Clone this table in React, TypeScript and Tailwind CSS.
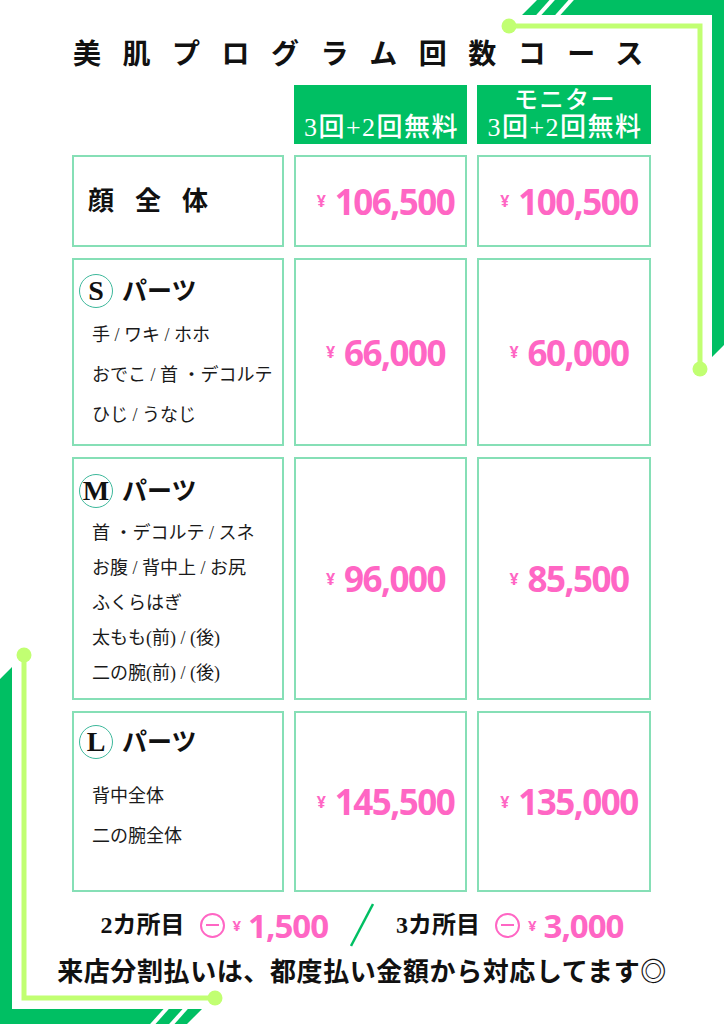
import React from 'react';

const jp = "font-['Liberation_Serif','Noto_Sans_CJK_JP',serif]";
const cell = 'border-2 border-[#86dfb6] bg-white';

function Corner() {
  return (
    <g>
      <polygon points="522,15 537,0 724,0 724,345 712,357 712,15" fill="#00bf63" />
      <line x1="537" y1="17" x2="554" y2="-2" stroke="#fff" strokeWidth="4" />
      <line x1="556" y1="17" x2="573" y2="-2" stroke="#fff" strokeWidth="4" />
      <polyline points="509,26 700,26 700,369" fill="none" stroke="#c1ff72" strokeWidth="5" />
      <circle cx="509" cy="26" r="7.5" fill="#c1ff72" />
      <circle cx="700" cy="369" r="7.5" fill="#c1ff72" />
    </g>
  );
}

function Price({ value }: { value: string }) {
  return (
    <div className={`${cell} flex items-center justify-center pl-[10px] font-['Open_Sans',sans-serif] text-[#ff66c4]`}>
      <span className="mr-[9px] text-[16px] font-bold">¥</span>
      <span className="text-[35px] leading-none font-bold tracking-[-1.5px]">{value}</span>
    </div>
  );
}

function Minus() {
  return (
    <span className="flex h-[25px] w-[25px] items-center justify-center rounded-full border-[2.5px] border-[#ff66c4]">
      <span className="h-[2.5px] w-[13px] bg-[#ff66c4]" />
    </span>
  );
}

type PartsProps = {
  size: string;
  items: string[];
  pt: string;
  gap: string;
  lh: string;
};

function Parts({ size, items, pt, gap, lh }: PartsProps) {
  return (
    <div className={`${cell} flex flex-col pl-[5px] ${pt}`}>
      <div className="flex items-center gap-[9px]">
        <span className="flex h-[34px] w-[34px] items-center justify-center rounded-full border border-[#3db89b] font-['Liberation_Serif',serif] text-[28px] leading-none font-bold">
          {size}
        </span>
        <span className={`${jp} text-[25px] leading-none font-bold`}>パーツ</span>
      </div>
      <ul className={`${gap} pl-[13px] text-[18px] text-[#1a1a1a] ${lh}`}>
        {items.map((t) => (
          <li key={t}>{t}</li>
        ))}
      </ul>
    </div>
  );
}

export default function App() {
  return (
    <div className={`relative h-[1024px] w-[724px] overflow-hidden bg-white text-[#111] ${jp}`}>
      <svg className="pointer-events-none absolute inset-0" width="724" height="1024" viewBox="0 0 724 1024">
        <Corner />
        <g transform="rotate(180 362 512)">
          <Corner />
        </g>
      </svg>

      <div className="relative">
        <h1 className="pt-[39px] pl-[73px] text-[28px] leading-[32px] font-bold tracking-[21.5px]">
          美肌プログラム回数コース
        </h1>

        <div className="mt-[14px] ml-[72px] grid grid-cols-[212px_173px_174px] grid-rows-[59px_92px_188px_243px_181px] gap-x-[10px] gap-y-[11px]">
          <div />
          <div className="flex flex-col items-center justify-end bg-[#00bf63] pb-[3px] pl-[2px] text-[26px] leading-[27px] font-medium tracking-[1.5px] text-white">
            <span>3回+2回無料</span>
          </div>
          <div className="flex flex-col items-center justify-end bg-[#00bf63] pb-[3px] pl-[2px] text-[26px] leading-[27px] font-medium tracking-[1.5px] text-white">
            <span className="text-[24px]">モニター</span>
            <span>3回+2回無料</span>
          </div>

          <div className={`${cell} flex items-center pl-[14px] text-[26px] font-bold tracking-[21px]`}>顔全体</div>
          <Price value="106,500" />
          <Price value="100,500" />

          <Parts
            size="S"
            pt="pt-[14px]"
            gap="mt-[7px]"
            lh="leading-[40px]"
            items={['手 / ワキ / ホホ', 'おでこ / 首 ・デコルテ', 'ひじ / うなじ']}
          />
          <Price value="66,000" />
          <Price value="60,000" />

          <Parts
            size="M"
            pt="pt-[15px]"
            gap="mt-[8px]"
            lh="leading-[35px]"
            items={['首 ・デコルテ / スネ', 'お腹 / 背中上 / お尻', 'ふくらはぎ', '太もも(前) / (後)', '二の腕(前) / (後)']}
          />
          <Price value="96,000" />
          <Price value="85,500" />

          <Parts
            size="L"
            pt="pt-[12px]"
            gap="mt-[17px]"
            lh="leading-[40px]"
            items={['背中全体', '二の腕全体']}
          />
          <Price value="145,500" />
          <Price value="135,000" />
        </div>

        <div className="mt-[11px] flex h-[44px] items-center justify-center">
          <span className="text-[24px] font-bold">2カ所目</span>
          <span className="ml-[15px]">
            <Minus />
          </span>
          <span className="ml-[8px] font-['Open_Sans',sans-serif] text-[15px] font-bold text-[#ff66c4]">¥</span>
          <span className="ml-[7px] font-['Open_Sans',sans-serif] text-[33px] leading-none font-bold tracking-[-1px] text-[#ff66c4]">1,500</span>
          <svg className="mx-[22px]" width="24" height="44" viewBox="0 0 24 44">
            <line x1="1" y1="43" x2="23" y2="1" stroke="#00bf63" strokeWidth="2.5" />
          </svg>
          <span className="text-[24px] font-bold">3カ所目</span>
          <span className="ml-[15px]">
            <Minus />
          </span>
          <span className="ml-[8px] font-['Open_Sans',sans-serif] text-[15px] font-bold text-[#ff66c4]">¥</span>
          <span className="ml-[7px] font-['Open_Sans',sans-serif] text-[33px] leading-none font-bold tracking-[-1px] text-[#ff66c4]">3,000</span>
        </div>

        <p className="mt-[10px] text-center text-[26px] leading-[32px] font-bold tracking-[0.6px]">
          来店分割払いは、都度払い金額から対応してます◎
        </p>
      </div>
    </div>
  );
}
